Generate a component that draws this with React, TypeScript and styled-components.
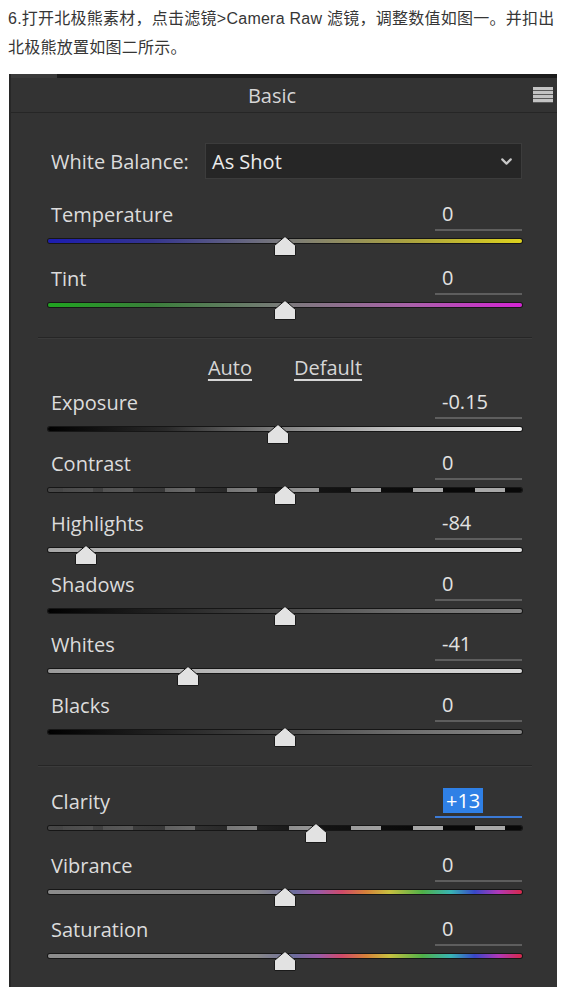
import React from "react";
import styled, { createGlobalStyle } from "styled-components";
import { ChevronDown } from "lucide-react";

const GlobalStyle = createGlobalStyle`
  html, body {
    margin: 0;
    padding: 0;
    background: #fff;
  }
  body {
    font-family: "Open Sans", "Noto Sans", sans-serif;
  }
`;

const Page = styled.div`
  width: 568px;
`;

const Intro = styled.p`
  margin: 0;
  padding: 4px 8px 0;
  font-family: "Liberation Sans", "Noto Sans CJK SC", sans-serif;
  font-size: 16px;
  letter-spacing: 0.25px;
  line-height: 29px;
  color: #363636;
  white-space: nowrap;
`;

const Panel = styled.section`
  margin: 12px 11px 0 9px;
  background: #333333;
  border-left: 2px solid #272727;
  padding-bottom: 9px;
  color: #dcdcdc;
`;

const TopStrip = styled.div`
  height: 4px;
  background: linear-gradient(90deg, #3a3a3a 0 46px, #1c1c1c 46px);
`;

const Header = styled.header`
  height: 34px;
  display: flex;
  align-items: center;
  padding-right: 4px;
  border-bottom: 1px solid #262626;
`;

const Title = styled.div`
  flex: 1;
  text-align: center;
  font-size: 20px;
  color: #d6d6d6;
`;

const MenuIcon = styled.span`
  width: 20px;
  height: 16px;
  background: repeating-linear-gradient(180deg, #c4c4c4 0 3px, #5a5a5a 3px 4px);
`;

const Body = styled.div`
  padding: 0 35px 0 37px;
`;

const WBRow = styled.div`
  display: flex;
  align-items: center;
  height: 36px;
  margin-top: 30px;
  margin-bottom: 20px;
`;

const WBLabel = styled.span`
  width: 157px;
  box-sizing: border-box;
  padding-left: 3px;
  font-size: 20px;
  color: #dcdcdc;
`;

const Select = styled.div`
  flex: 1;
  height: 36px;
  box-sizing: border-box;
  display: flex;
  align-items: center;
  justify-content: space-between;
  padding: 0 6px;
  background: #262626;
  border: 1px solid #3c3c3c;
  font-size: 20px;
  color: #ececec;
`;

const Divider = styled.hr<{ $top: number }>`
  height: 0;
  margin: ${(p) => p.$top}px -10px 0;
  border: 0;
  border-top: 1px solid #262626;
  border-bottom: 1px solid #3b3b3b;
`;

const AutoBar = styled.div`
  height: 48px;
  box-sizing: border-box;
  display: flex;
  justify-content: center;
  align-items: flex-end;
  gap: 42px;
  padding-bottom: 4px;
`;

const LinkButton = styled.button`
  padding: 0;
  border: 0;
  background: none;
  font-family: inherit;
  font-size: 20px;
  line-height: 30px;
  color: #d6d6d6;
  text-decoration: underline;
  text-underline-offset: 4px;
  text-decoration-thickness: 2px;
`;

const Group = styled.div<{ $pad: number }>`
  padding-top: ${(p) => p.$pad}px;
`;

const Row = styled.div<{ $h: number }>`
  height: ${(p) => p.$h}px;
`;

const Head = styled.div`
  height: 32px;
  display: flex;
  justify-content: space-between;
`;

const Label = styled.span`
  padding-left: 3px;
  line-height: 32px;
  font-size: 20px;
  color: #dcdcdc;
`;

const ValueField = styled.div<{ $active?: boolean }>`
  width: 87px;
  height: 32px;
  box-sizing: border-box;
  padding-left: 7px;
  border-bottom: 2px solid ${(p) => (p.$active ? "#3b7ad6" : "#5e5e5e")};
  line-height: 30px;
  font-size: 20px;
  color: #e2e2e2;
`;

const ValueText = styled.span<{ $selected?: boolean }>`
  display: inline-block;
  line-height: 25px;
  padding: ${(p) => (p.$selected ? "0 3px" : "0")};
  margin-left: ${(p) => (p.$selected ? "1px" : "0")};
  background: ${(p) => (p.$selected ? "#2f80e6" : "transparent")};
  color: ${(p) => (p.$selected ? "#ffffff" : "#e2e2e2")};
`;

const TrackZone = styled.div`
  padding-top: 8px;
`;

const TrackWrap = styled.div`
  position: relative;
  height: 4px;
`;

const contrastBg =
  "linear-gradient(90deg, rgba(72,72,72,1) 0%, rgba(72,72,72,0.75) 25%, rgba(72,72,72,0.2) 55%, rgba(72,72,72,0) 80%), " +
  "repeating-linear-gradient(90deg, #a8a8a8 0 30px, #080808 30px 62px)";

const spectrumBg =
  "linear-gradient(90deg, #8c8c8c 0%, #888 44%, #6c6c9c 52%, #9a5aa8 57%, #d04a6a 62%, #d6803a 67%, #c8c040 72%, #50b048 79%, #38b4b4 85%, #3848c8 90%, #b038b8 95%, #d8284a 100%)";

const trackBg: Record<string, string> = {
  temperature: "linear-gradient(90deg, #1c1cb0 0%, #35358e 22%, #7a7a7a 50%, #aaa240 76%, #ddd21e 100%)",
  tint: "linear-gradient(90deg, #20a420 0%, #3a7e3a 22%, #7a7a7a 50%, #a862a8 76%, #d424d4 100%)",
  exposure: "linear-gradient(90deg, #000 0%, #2a2a2a 25%, #858585 50%, #c8c8c8 75%, #f2f2f2 100%)",
  contrast: contrastBg,
  highlights: "linear-gradient(90deg, #a8a8a8 0%, #d0d0d0 50%, #e0e0e0 100%)",
  shadows: "linear-gradient(90deg, #000 0%, #3a3a3a 40%, #6e6e6e 75%, #858585 100%)",
  whites: "linear-gradient(90deg, #9a9a9a 0%, #c4c4c4 50%, #d6d6d6 100%)",
  blacks: "linear-gradient(90deg, #000 0%, #3a3a3a 40%, #6e6e6e 75%, #858585 100%)",
  spectrum: spectrumBg,
};

const Track = styled.div<{ $kind: string }>`
  height: 4px;
  border-radius: 2px;
  background: ${(p) => trackBg[p.$kind]};
  background-position: ${(p) => (p.$kind === "contrast" ? "0 0, 55px 0" : "0 0")};
  box-shadow: 0 0 0 1px #161616;
`;

const Thumb = styled.span`
  position: absolute;
  top: -3px;
  width: 22px;
  height: 20px;
  transform: translateX(-50%);
  display: block;
  line-height: 0;
`;

type SliderProps = {
  label: string;
  value: number;
  text: string;
  min: number;
  max: number;
  kind: string;
  h: number;
  selected?: boolean;
};

const Slider: React.FC<SliderProps> = ({ label, value, text, min, max, kind, h, selected }) => {
  const pct = ((value - min) / (max - min)) * 100;
  return (
    <Row $h={h}>
      <Head>
        <Label>{label}</Label>
        <ValueField $active={selected}>
          <ValueText $selected={selected}>{text}</ValueText>
        </ValueField>
      </Head>
      <TrackZone>
        <TrackWrap>
          <Track $kind={kind} />
          <Thumb style={{ left: `${pct}%` }}>
            <svg width="22" height="20" viewBox="0 0 22 20">
              <polygon
                points="11,0.5 21.5,9.5 21.5,19.5 0.5,19.5 0.5,9.5"
                fill="#e2e2e2"
                stroke="#1a1a1a"
                strokeWidth="1"
              />
            </svg>
          </Thumb>
        </TrackWrap>
      </TrackZone>
    </Row>
  );
};

const tone = [
  { label: "Exposure", value: -0.15, text: "-0.15", min: -5, max: 5, kind: "exposure" },
  { label: "Contrast", value: 0, text: "0", min: -100, max: 100, kind: "contrast" },
  { label: "Highlights", value: -84, text: "-84", min: -100, max: 100, kind: "highlights" },
  { label: "Shadows", value: 0, text: "0", min: -100, max: 100, kind: "shadows" },
  { label: "Whites", value: -41, text: "-41", min: -100, max: 100, kind: "whites" },
  { label: "Blacks", value: 0, text: "0", min: -100, max: 100, kind: "blacks" },
];

const presence = [
  { label: "Clarity", value: 13, text: "+13", min: -100, max: 100, kind: "contrast", selected: true },
  { label: "Vibrance", value: 0, text: "0", min: -100, max: 100, kind: "spectrum" },
  { label: "Saturation", value: 0, text: "0", min: -100, max: 100, kind: "spectrum" },
];

const App: React.FC = () => {
  return (
    <Page>
      <GlobalStyle />
      <Intro>
        6.打开北极熊素材，点击滤镜&gt;Camera Raw 滤镜，调整数值如图一。并扣出
        <br />
        北极熊放置如图二所示。
      </Intro>

      <Panel>
        <TopStrip />
        <Header>
          <Title>Basic</Title>
          <MenuIcon />
        </Header>

        <Body>
          <WBRow>
            <WBLabel>White Balance:</WBLabel>
            <Select>
              <span>As Shot</span>
              <ChevronDown size={17} strokeWidth={3} color="#c8c8c8" />
            </Select>
          </WBRow>

          <Slider label="Temperature" value={0} text="0" min={-100} max={100} kind="temperature" h={64} />
          <Slider label="Tint" value={0} text="0" min={-100} max={100} kind="tint" h={64} />

          <Divider $top={10} />
          <AutoBar>
            <LinkButton>Auto</LinkButton>
            <LinkButton>Default</LinkButton>
          </AutoBar>

          {tone.map((s) => (
            <Slider key={s.label} {...s} h={60.5} />
          ))}

          <Divider $top={15} />
          <Group $pad={19}>
            {presence.map((s) => (
              <Slider key={s.label} {...s} h={64} />
            ))}
          </Group>
        </Body>
      </Panel>
    </Page>
  );
};

export default App;
